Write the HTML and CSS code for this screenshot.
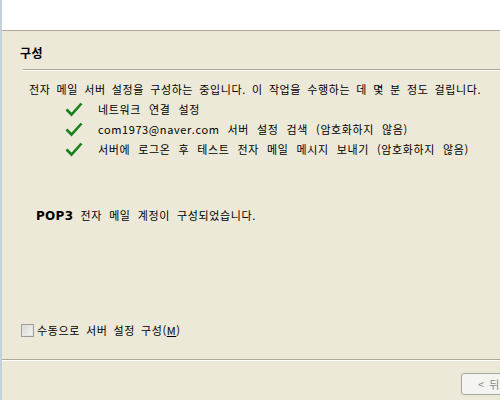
FILE: index.html
```html
<!DOCTYPE html>
<html lang="ko">
<head>
<meta charset="utf-8">
<link rel="stylesheet" href="styles.css">
</head>
<body>
<div class="window">
  <div class="header"></div>
  <div class="main">
    <h2 class="title">구성</h2>
    <div class="rule"></div>
    <p class="intro">전자 메일 서버 설정을 구성하는 중입니다. 이 작업을 수행하는 데 몇 분 정도 걸립니다.</p>
    <ul class="steps">
      <li class="step"><svg class="check" viewBox="0 0 18 15" width="18" height="15"><path d="M1.5 7.5 L6.5 12.5 L16.5 1.5" fill="none" stroke="#17801a" stroke-width="2.6" stroke-linejoin="miter"/></svg><span>네트워크 연결 설정</span></li>
      <li class="step"><svg class="check" viewBox="0 0 18 15" width="18" height="15"><path d="M1.5 7.5 L6.5 12.5 L16.5 1.5" fill="none" stroke="#17801a" stroke-width="2.6" stroke-linejoin="miter"/></svg><span>com1973@naver.com 서버 설정 검색 (암호화하지 않음)</span></li>
      <li class="step"><svg class="check" viewBox="0 0 18 15" width="18" height="15"><path d="M1.5 7.5 L6.5 12.5 L16.5 1.5" fill="none" stroke="#17801a" stroke-width="2.6" stroke-linejoin="miter"/></svg><span>서버에 로그온 후 테스트 전자 메일 메시지 보내기 (암호화하지 않음)</span></li>
    </ul>
    <p class="result"><b>POP3</b> 전자 메일 계정이 구성되었습니다.</p>
    <label class="manual"><span class="box"></span><span>수동으로 서버 설정 구성(<u>M</u>)</span></label>
  </div>
  <div class="footer">
    <button class="btn">&lt; 뒤로(<u>B</u>)</button>
  </div>
</div>
</body>
</html>
```

FILE: styles.css
```css
html, body {
  margin: 0;
  padding: 0;
}
body {
  width: 500px;
  height: 400px;
  overflow: hidden;
  background: #ece9d8;
  font-family: "Noto Sans CJK KR", "Liberation Sans", sans-serif;
  font-size: 11px;
  color: #000;
}
.window {
  height: 400px;
  border-left: 2px solid #c3d1dd;
  display: flex;
  flex-direction: column;
}
.header {
  height: 30px;
  background: #fff;
  border-bottom: 1px solid #aca899;
  flex: none;
}
.main {
  flex: 1;
  padding-top: 13px;
}
.title {
  margin: 0 0 0 18px;
  font-size: 12px;
  font-weight: bold;
  line-height: 18px;
  letter-spacing: 0.5px;
}
.rule {
  margin: 7px 0 0 21px;
  border-top: 1px solid #aca899;
  border-bottom: 1px solid #fff;
}
.intro {
  margin: 8px 0 0 27px;
  line-height: 20px;
  letter-spacing: 0.6px;
  word-spacing: 2.5px;
  white-space: nowrap;
}
.steps {
  list-style: none;
  margin: 0;
  padding: 0 0 0 63px;
}
.step {
  display: flex;
  align-items: center;
  height: 20px;
  letter-spacing: 0.6px;
  word-spacing: 4.4px;
  white-space: nowrap;
}
.check {
  flex: none;
  margin-right: 15px;
}
.result {
  margin: 46px 0 0 34px;
  line-height: 20px;
  letter-spacing: 0.6px;
  word-spacing: 3.5px;
}
.result b {
  font-family: "DejaVu Sans", sans-serif;
  font-size: 12px;
  letter-spacing: 0.3px;
}
.manual {
  display: flex;
  align-items: center;
  gap: 3px;
  margin: 94px 0 0 19px;
  height: 20px;
  letter-spacing: 0.6px;
  word-spacing: 2.4px;
}
.box {
  width: 11px;
  height: 11px;
  border: 1px solid #9c9c9c;
  background: linear-gradient(135deg, #d6d6d0, #f7f7f5);
  box-shadow: inset 0 0 0 1px #e6e6e0;
}
.footer {
  flex: none;
  box-sizing: border-box;
  height: 41px;
  border-top: 1px solid #aca899;
  box-shadow: inset 0 1px 0 #fff;
  display: flex;
  align-items: flex-start;
  padding-top: 13px;
  padding-left: 459px;
  overflow: hidden;
}
.btn {
  flex: none;
  width: 75px;
  height: 22px;
  border: 1px solid #a8a69c;
  border-radius: 3px;
  background: #f4f4f0;
  color: #8a8a8a;
  font-family: "Noto Sans CJK KR", sans-serif;
  font-size: 11px;
  text-align: left;
  padding: 0 0 0 16px;
  word-spacing: 2px;
}
```
